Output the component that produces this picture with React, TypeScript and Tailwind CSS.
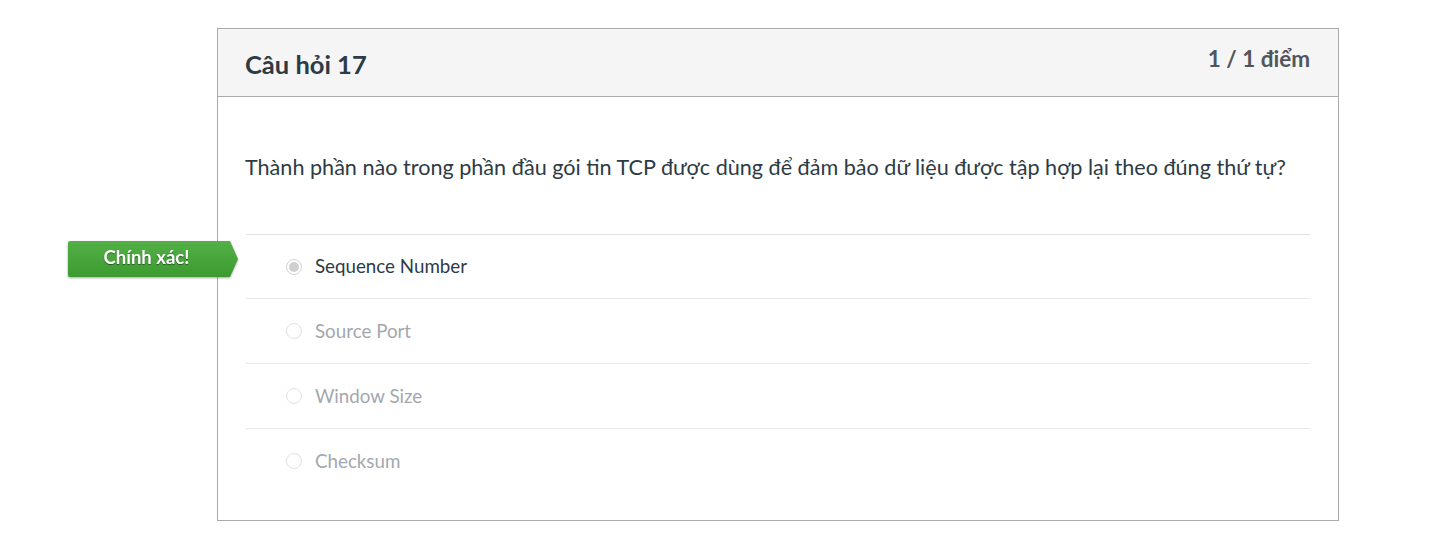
import { useState } from "react";

type Answer = {
  id: string;
  label: string;
};

const answers: Answer[] = [
  { id: "a1", label: "Sequence Number" },
  { id: "a2", label: "Source Port" },
  { id: "a3", label: "Window Size" },
  { id: "a4", label: "Checksum" },
];

function Radio({ checked }: { checked: boolean }) {
  return (
    <span
      className={
        "flex h-[16px] w-[16px] shrink-0 items-center justify-center rounded-full border " +
        (checked ? "border-[#d4d4d4] bg-white" : "border-[#e2e2e2] bg-white")
      }
    >
      {checked && <span className="h-[10px] w-[10px] rounded-full bg-[#cfcfcf]" />}
    </span>
  );
}

function CorrectBadge() {
  return (
    <div className="absolute left-[68px] top-[241px] flex h-[36px] items-center drop-shadow-[0_1px_1px_rgba(0,0,0,0.35)]">
      <div className="flex h-full w-[157px] items-center justify-center rounded-l-[2px] bg-gradient-to-b from-[#52b046] to-[#3c9a31]">
        <span className="-mt-[2px] text-[18.5px] font-bold text-white [text-shadow:0_1px_1px_rgba(0,0,0,0.45)]">Chính xác!</span>
      </div>
      <svg width="13" height="36" viewBox="0 0 13 36" className="block">
        <defs>
          <linearGradient id="badgeTip" x1="0" y1="0" x2="0" y2="1">
            <stop offset="0" stopColor="#52b046" />
            <stop offset="1" stopColor="#3c9a31" />
          </linearGradient>
        </defs>
        <polygon points="0,0 0,36 5,36 13,18 5,0" fill="url(#badgeTip)" />
      </svg>
    </div>
  );
}

export default function App() {
  const [selected] = useState<string>("a1");

  return (
    <div className="relative min-h-[558px] bg-white pt-[28px] font-['Lato','Noto_Sans',sans-serif] text-[#2d3b45]">
      <CorrectBadge />
      <div className="ml-[217px] w-[1122px] border border-[#aaaaaa]">
        <div className="flex h-[68px] items-start justify-between border-b border-[#aaaaaa] bg-[#f5f5f5] px-7">
          <h2 className="-ml-[1px] mt-[20px] text-[25.5px] font-bold leading-[30px]">Câu hỏi 17</h2>
          <div className="mt-[16px] text-[22.5px] font-bold leading-[27px] text-[#51565b]">1 / 1 điểm</div>
        </div>
        <div className="px-7 pb-[27px]">
          <p className="-ml-[1px] mt-[55px] text-[21.6px] leading-[30px]">
            Thành phần nào trong phần đầu gói tin TCP được dùng để đảm bảo dữ liệu được tập hợp lại theo đúng thứ tự?
          </p>
          <div className="mt-[52px]">
            {answers.map((a, i) => (
              <div
                key={a.id}
                className={
                  "flex items-center border-t border-[#e8e8e8] pl-[40px] first:border-[#e2e2e2] " +
                  (i === 0 ? "h-[64px]" : "h-[65px]")
                }
              >
                <Radio checked={selected === a.id} />
                <span
                  className={
                    "ml-[13px] text-[18.75px] " + (selected === a.id ? "text-[#2d3b45]" : "text-[#a3a8ad]")
                  }
                >
                  {a.label}
                </span>
              </div>
            ))}
          </div>
        </div>
      </div>
    </div>
  );
}
